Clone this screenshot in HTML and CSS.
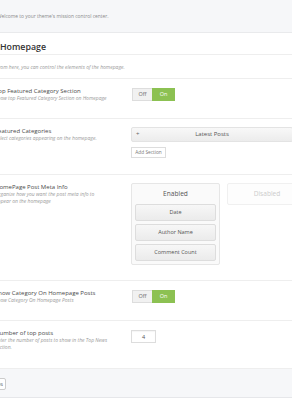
FILE: index.html
```html
<!DOCTYPE html>
<html>
<head>
  <title>Theme Options</title>
  <link rel="stylesheet" href="styles.css">
</head>
<body>
  <div class="panel">
    <div class="intro">
      Welcome to your theme's mission control center.
    </div>

    <div class="section-head">
      <h2>Homepage</h2>
    </div>
    <div class="section-desc">
      From here, you can control the elements of the homepage.
    </div>

    <div class="row">
      <div class="label">
        <div class="title">Top Featured Category Section</div>
        <div class="desc">Show top Featured Category Section on Homepage</div>
      </div>
      <div class="control">
        <div class="toggle">
          <span class="off">Off</span>
          <span class="on">On</span>
        </div>
      </div>
    </div>

    <div class="row">
      <div class="label">
        <div class="title">Featured Categories</div>
        <div class="desc">Select categories appearing on the homepage.</div>
      </div>
      <div class="control">
        <div class="sort-item">
          <span class="plus">+</span>
          Latest Posts
        </div>
        <button class="add-section">Add Section</button>
      </div>
    </div>

    <div class="row row-meta">
      <div class="label">
        <div class="title">HomePage Post Meta Info</div>
        <div class="desc">Organize how you want the post meta info to appear on the homepage</div>
      </div>
      <div class="control">
        <div class="meta-lists">
          <div class="meta-box">
            <div class="meta-title">Enabled</div>
            <div class="meta-item">Date</div>
            <div class="meta-item">Author Name</div>
            <div class="meta-item">Comment Count</div>
          </div>
          <div class="meta-box disabled">
            <div class="meta-title">Disabled</div>
          </div>
        </div>
      </div>
    </div>

    <div class="row">
      <div class="label">
        <div class="title">Show Category On Homepage Posts</div>
        <div class="desc">Show Category On Homepage Posts</div>
      </div>
      <div class="control">
        <div class="toggle">
          <span class="off">Off</span>
          <span class="on">On</span>
        </div>
      </div>
    </div>

    <div class="row row-last">
      <div class="label">
        <div class="title">Number of top posts</div>
        <div class="desc">Enter the number of posts to show in the Top News section.</div>
      </div>
      <div class="control">
        <input class="num" type="text" value="4">
      </div>
    </div>

    <div class="footer">
      <button class="save">Save Changes</button>
    </div>
  </div>
</body>
</html>
```

FILE: styles.css
```css
html, body {
  margin: 0;
  padding: 0;
  overflow: hidden;
  background-color: #ffffff;
}

body {
  font-family: 'Open Sans', 'Liberation Sans', sans-serif;
  color: #555555;
}

.panel {
  margin-left: -5px;
  width: 330px;
}

.intro {
  height: 33px;
  box-sizing: border-box;
  padding: 12px 0 0 2px;
  font-size: 4.9px;
  line-height: 8px;
  color: #8a8a8a;
  background-color: #f6f7f9;
  border-bottom: 1px solid #e9eaec;
}

.section-head {
  height: 22px;
  box-sizing: border-box;
  padding: 7px 0 0 5px;
  border-bottom: 1px solid #eeeeee;
}

h2 {
  margin: 0;
  font-size: 8.8px;
  line-height: 14px;
  font-weight: 600;
  color: #333333;
}

.section-desc {
  height: 24px;
  box-sizing: border-box;
  padding: 8px 0 0 1px;
  font-size: 5px;
  line-height: 8px;
  font-style: italic;
  color: #999999;
  border-bottom: 1px solid #eeeeee;
}

.row {
  display: grid;
  grid-template-columns: 136px 1fr;
  padding-bottom: 16px;
  border-bottom: 1px solid #eeeeee;
}

.row-meta {
  padding-bottom: 15px;
}

.row-last {
  padding-bottom: 17px;
}

.label {
  padding-top: 8px;
  padding-right: 22px;
}

.title {
  font-size: 6px;
  line-height: 8px;
  color: #4a4a4a;
}

.desc {
  font-size: 5px;
  line-height: 7px;
  font-style: italic;
  color: #9a9a9a;
}

.control {
  padding-top: 9px;
}

.toggle {
  display: flex;
  width: 43px;
  height: 13px;
  margin-left: 1px;
  font-size: 5.5px;
  line-height: 13px;
  text-align: center;
}

.toggle .off {
  width: 20px;
  box-sizing: border-box;
  background-color: #f1f1f1;
  border: 1px solid #dddddd;
  border-right: none;
  line-height: 11px;
  color: #666666;
}

.toggle .on {
  flex: 1;
  background-color: #8cc152;
  color: #ffffff;
}

.sort-item {
  position: relative;
  width: 162px;
  height: 15px;
  box-sizing: border-box;
  margin-top: -1px;
  border: 1px solid #e3e3e3;
  border-radius: 2px;
  background: linear-gradient(#f8f8f8, #ececec);
  font-size: 6px;
  line-height: 13px;
  text-align: center;
  color: #555555;
}

.plus {
  position: absolute;
  left: 4px;
  top: 0;
  color: #666666;
}

.add-section {
  display: block;
  margin-top: 5px;
  height: 11px;
  width: 35px;
  padding: 0;
  border: 1px solid #dddddd;
  background-color: #ffffff;
  font-family: inherit;
  font-size: 4.8px;
  line-height: 9px;
  color: #777777;
}

.meta-lists {
  display: flex;
  align-items: flex-start;
  gap: 7px;
  margin-top: -1px;
}

.meta-box {
  width: 89px;
  box-sizing: border-box;
  padding: 0 3px 3px;
  border: 1px solid #e6e6e6;
  border-radius: 2px;
  background-color: #fafafa;
}

.meta-box.disabled {
  width: 80px;
  height: 22px;
  padding: 0;
  border-color: #f0f0f0;
  background-color: #fdfdfd;
}

.meta-title {
  height: 20px;
  font-size: 6.6px;
  line-height: 20px;
  text-align: center;
  color: #555555;
}

.disabled .meta-title {
  color: #cccccc;
}

.meta-item {
  height: 17px;
  box-sizing: border-box;
  margin-bottom: 3px;
  border: 1px solid #dddddd;
  border-radius: 2px;
  background: linear-gradient(#f7f7f7, #ebebeb);
  font-size: 5.5px;
  line-height: 15px;
  text-align: center;
  color: #555555;
}

.meta-item:last-child {
  margin-bottom: 0;
}

.num {
  display: block;
  width: 25px;
  height: 13px;
  box-sizing: border-box;
  margin: 0;
  padding: 0;
  border: 1px solid #dddddd;
  font-family: inherit;
  font-size: 5.5px;
  text-align: center;
  color: #555555;
  box-shadow: inset 0 1px 1px rgba(0, 0, 0, 0.04);
}

.footer {
  height: 29px;
  box-sizing: border-box;
  padding-top: 9px;
  background-color: #f6f7f9;
  border-bottom: 1px solid #e6e7ea;
}

.save {
  display: block;
  margin-left: -30px;
  width: 41px;
  height: 12px;
  padding: 0 2px 0 0;
  border: 1px solid #cccccc;
  border-radius: 2px;
  background-color: #ffffff;
  font-family: inherit;
  font-size: 5px;
  line-height: 10px;
  text-align: right;
  color: #555555;
}
```
